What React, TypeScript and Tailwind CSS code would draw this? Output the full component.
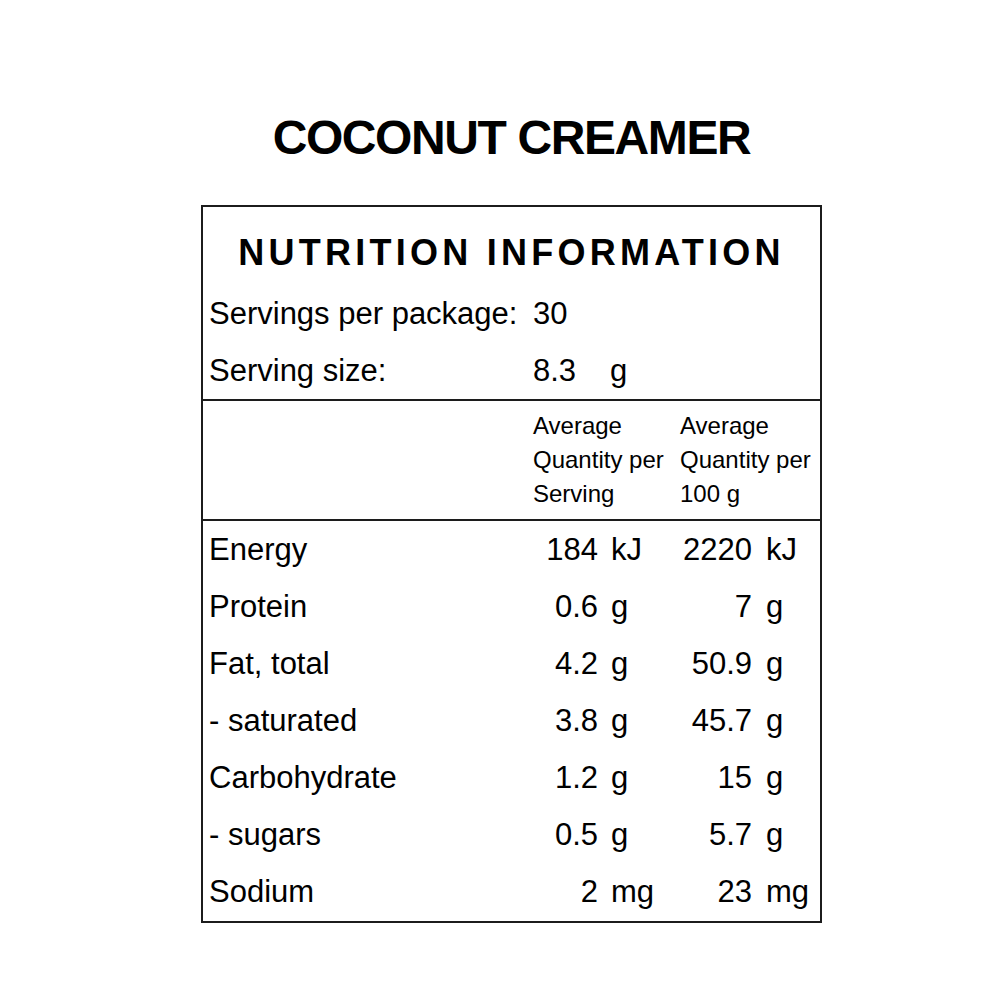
import React from "react";

interface Nutrient {
  name: string;
  serving: string;
  per100: string;
  unit: string;
}

const nutrients: Nutrient[] = [
  { name: "Energy", serving: "184", per100: "2220", unit: "kJ" },
  { name: "Protein", serving: "0.6", per100: "7", unit: "g" },
  { name: "Fat, total", serving: "4.2", per100: "50.9", unit: "g" },
  { name: "- saturated", serving: "3.8", per100: "45.7", unit: "g" },
  { name: "Carbohydrate", serving: "1.2", per100: "15", unit: "g" },
  { name: "- sugars", serving: "0.5", per100: "5.7", unit: "g" },
  { name: "Sodium", serving: "2", per100: "23", unit: "mg" },
];

const grid = "grid grid-cols-[330px_65px_82px_72px_68px]";

export default function App() {
  return (
    <div
      className="min-h-[1000px] w-[1000px] bg-white text-black"
      style={{ fontFamily: '"Liberation Sans", Arial, Helvetica, sans-serif' }}
    >
      <div className="ml-[201px] w-[621px] pt-[114px]">
        <h1 className="text-center text-[48px] font-bold leading-none tracking-[-1.4px]">
          COCONUT CREAMER
        </h1>

        <div className="mt-[43px] border-2 border-[#1c1c1c]">
          {/* heading + servings */}
          <div className="pt-[28px]">
            <h2 className="text-center text-[36px] font-bold leading-none tracking-[4.25px]">
              NUTRITION INFORMATION
            </h2>
            <div className="mt-[15px] text-[31px]">
              <div className={`${grid} h-[57px] items-center`}>
                <span className="pl-[6px]">Servings per package:</span>
                <span className="col-span-4">30</span>
              </div>
              <div className={`${grid} h-[56px] items-center`}>
                <span className="pl-[6px]">Serving size:</span>
                <span>8.3</span>
                <span className="pl-[12px]">g</span>
              </div>
            </div>
          </div>

          {/* column headings */}
          <div className={`${grid} border-t-2 border-[#1c1c1c] py-[8px] text-[24px] leading-[34px]`}>
            <span />
            <span className="col-span-2">
              Average
              <br />
              Quantity per
              <br />
              Serving
            </span>
            <span className="col-span-2">
              Average
              <br />
              Quantity per
              <br />
              100 g
            </span>
          </div>

          {/* nutrient rows */}
          <div className="border-t-2 border-[#1c1c1c] pt-[1px] text-[31px]">
            {nutrients.map((n) => (
              <div key={n.name} className={`${grid} h-[57px] items-center`}>
                <span className="pl-[6px]">{n.name}</span>
                <span className="text-right">{n.serving}</span>
                <span className="pl-[13px]">{n.unit}</span>
                <span className="text-right">{n.per100}</span>
                <span className="pl-[14px]">{n.unit}</span>
              </div>
            ))}
          </div>
        </div>
      </div>
    </div>
  );
}
